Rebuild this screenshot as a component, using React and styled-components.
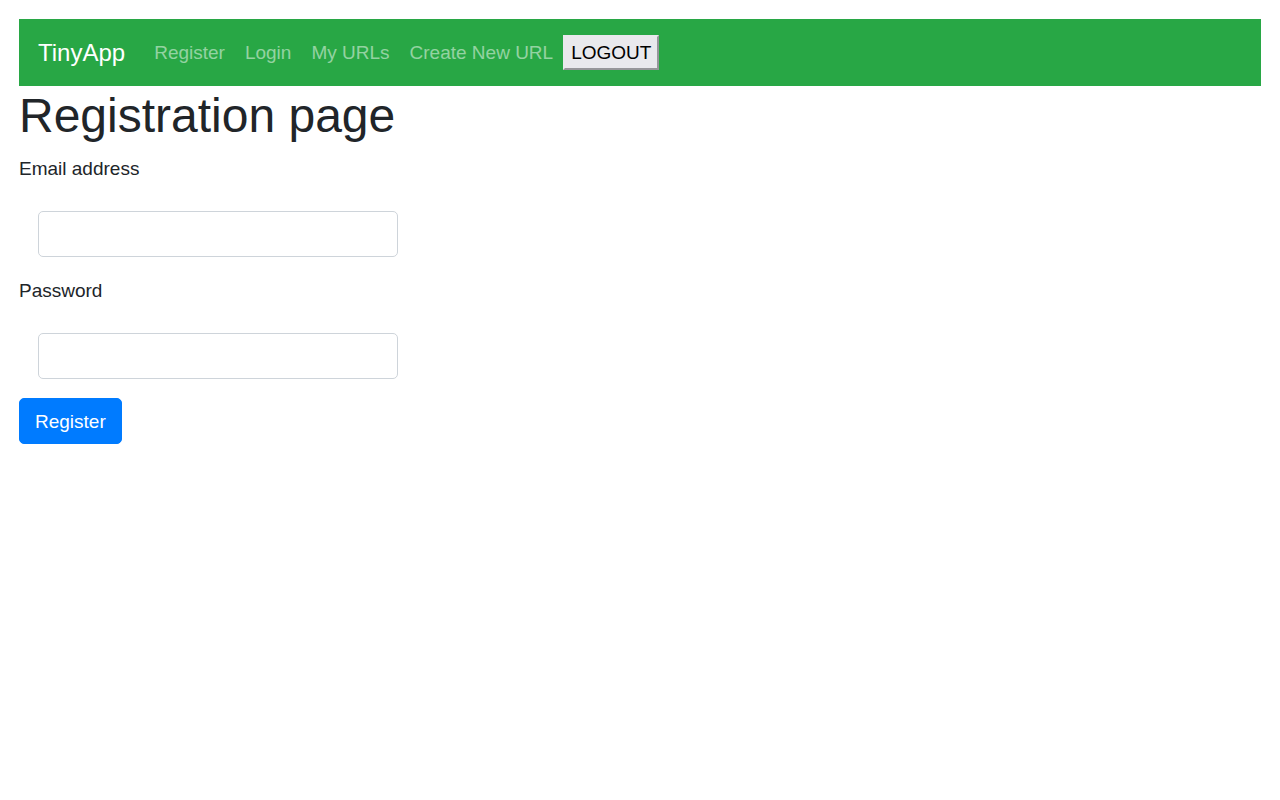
import React from "react";
import styled, { createGlobalStyle } from "styled-components";

const GlobalStyle = createGlobalStyle`
  *, *::before, *::after { box-sizing: border-box; }
  body {
    margin: 0;
    background: #fff;
    color: #212529;
    font-family: "Liberation Sans", Arial, sans-serif;
    font-size: 19px;
    line-height: 29px;
  }
`;

const Page = styled.div`
  padding: 19px;
`;

const Navbar = styled.nav`
  display: flex;
  align-items: center;
  min-height: 67px;
  padding: 10px 19px;
  background: #28a745;
`;

const Brand = styled.a`
  margin-right: 19px;
  color: #fff;
  font-size: 24px;
  line-height: 36px;
  text-decoration: none;
  white-space: nowrap;
`;

const NavList = styled.ul`
  display: flex;
  margin: 0;
  padding: 0;
  list-style: none;
`;

const NavLink = styled.a`
  display: block;
  padding: 8px 10px;
  color: rgba(255, 255, 255, 0.5);
  text-decoration: none;
  white-space: nowrap;
`;

const LogoutButton = styled.button`
  height: 35px;
  padding: 1px 6px;
  border: 2px solid;
  border-color: #e9e9ed #96969a #96969a #e9e9ed;
  border-radius: 0;
  background: #e9e9ed;
  color: #000;
  font: inherit;
  line-height: 29px;
`;

const Title = styled.h1`
  margin: 0 0 8px;
  font-size: 48px;
  font-weight: 500;
  line-height: 60px;
`;

const Field = styled.div`
  margin-bottom: 19px;
`;

const Label = styled.label`
  display: block;
  margin-bottom: 28px;
`;

const TextInput = styled.input`
  display: block;
  width: 360px;
  max-width: calc(100% - 38px);
  height: 46px;
  margin: 0 19px;
  padding: 7px 14px;
  border: 1px solid #ced4da;
  border-radius: 5px;
  background: #fff;
  color: #495057;
  font: inherit;
`;

const SubmitButton = styled.button`
  height: 46px;
  padding: 7px 15px;
  border: 1px solid #007bff;
  border-radius: 5px;
  background: #007bff;
  color: #fff;
  font: inherit;
`;

const links = ["Register", "Login", "My URLs", "Create New URL"];

export default function App() {
  return (
    <>
      <GlobalStyle />
      <Page>
        <Navbar>
          <Brand href="#">TinyApp</Brand>
          <NavList>
            {links.map((label) => (
              <li key={label}>
                <NavLink href="#">{label}</NavLink>
              </li>
            ))}
          </NavList>
          <LogoutButton type="button">LOGOUT</LogoutButton>
        </Navbar>
        <main>
          <Title>Registration page</Title>
          <form onSubmit={(event) => event.preventDefault()}>
            <Field>
              <Label htmlFor="email">Email address</Label>
              <TextInput id="email" type="email" name="email" />
            </Field>
            <Field>
              <Label htmlFor="password">Password</Label>
              <TextInput id="password" type="password" name="password" />
            </Field>
            <SubmitButton type="submit">Register</SubmitButton>
          </form>
        </main>
      </Page>
    </>
  );
}
